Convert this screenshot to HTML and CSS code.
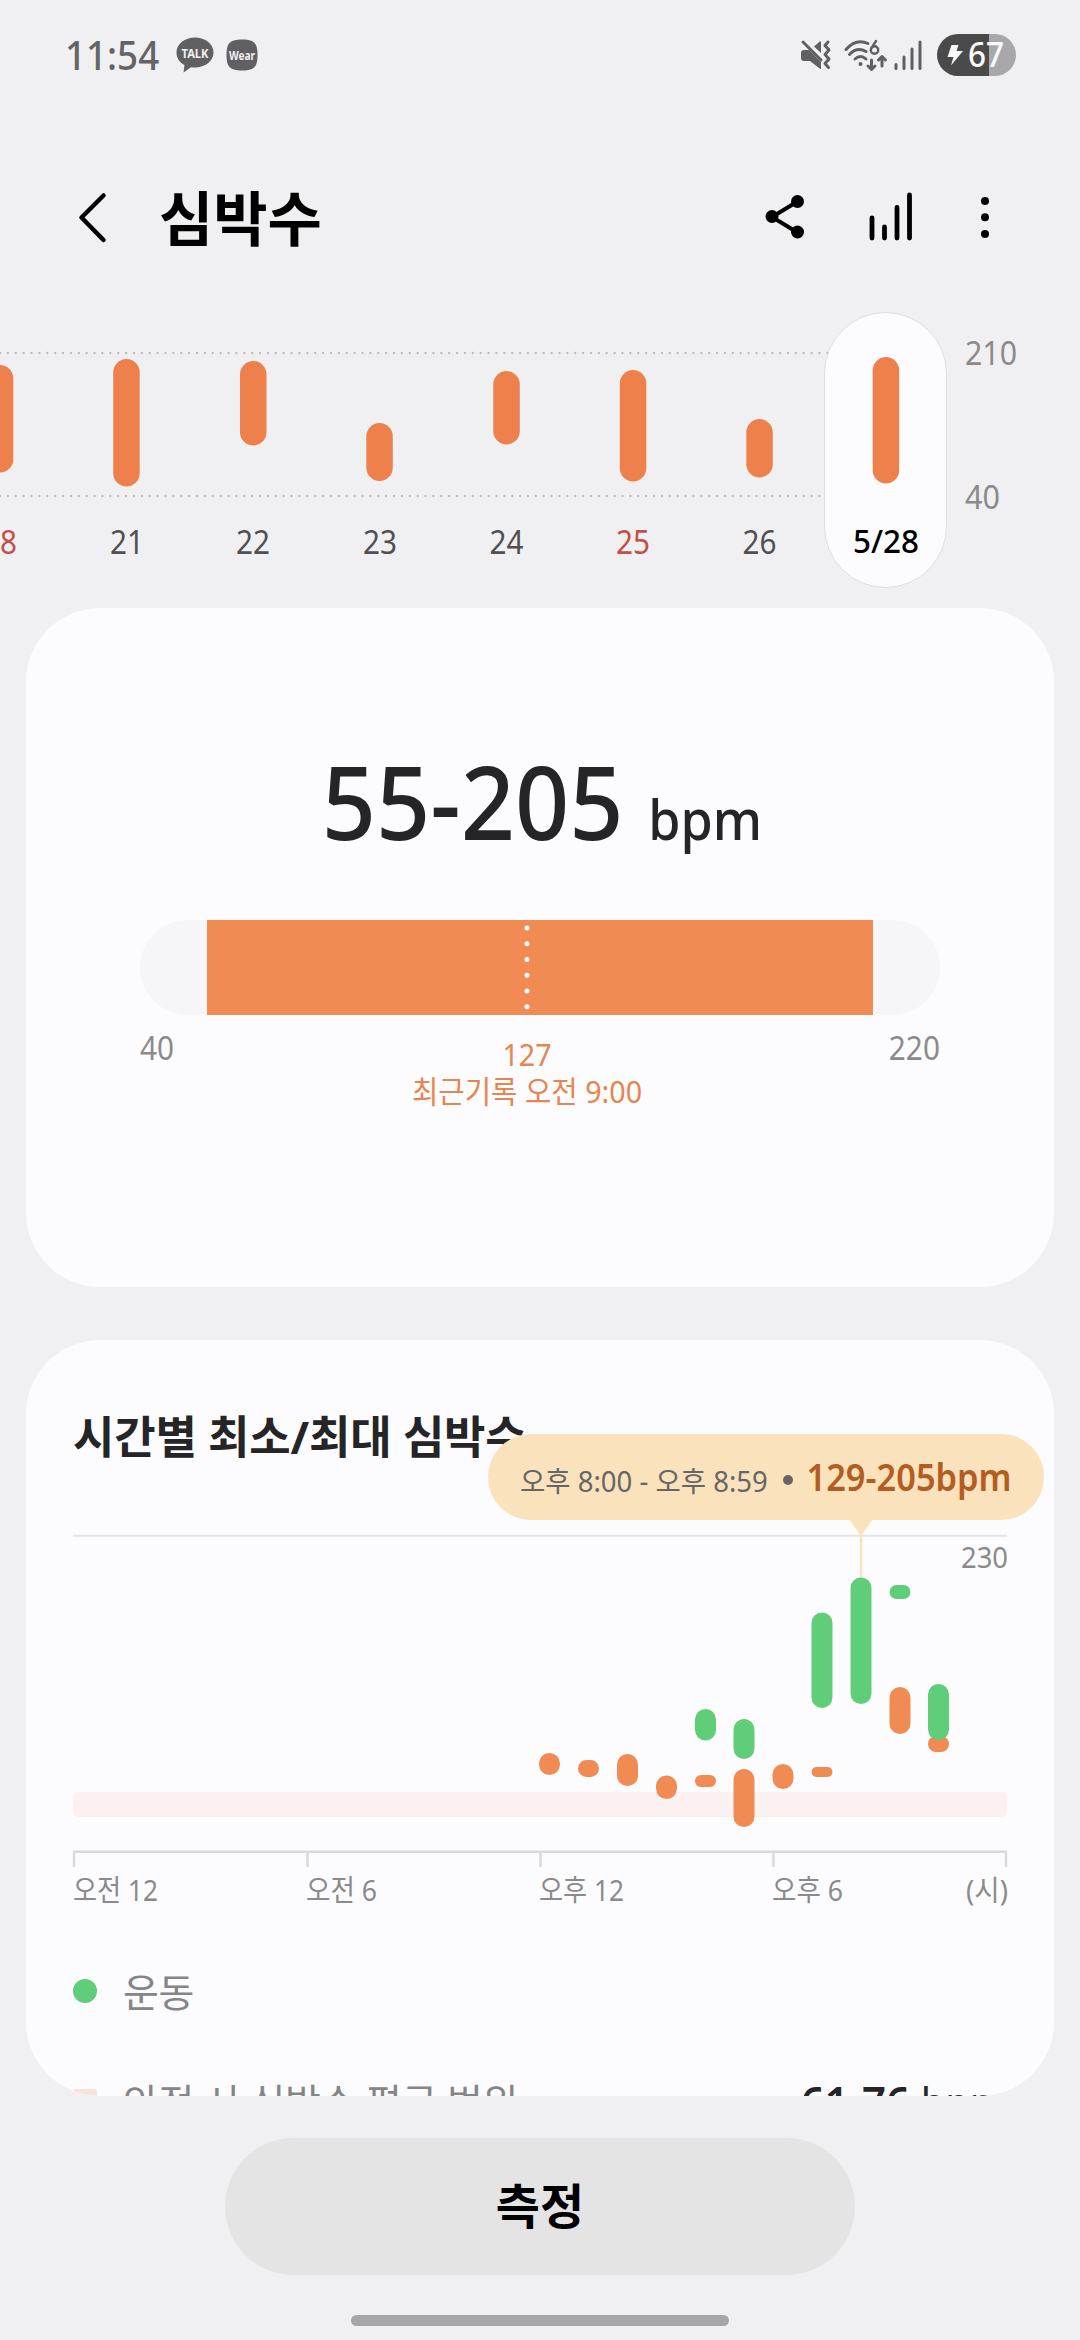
FILE: index.html
```html
<!DOCTYPE html>
<html lang="ko">

<head>
    <meta charset="UTF-8">
    <meta name="viewport" content="width=device-width, initial-scale=1.0">
    <title>심박수</title>
    <link rel="stylesheet" href="styles.css">
</head>

<body>
    <div class="status-bar">
        <div class="status-left">
            <span class="clock">11:54</span>
            <svg class="talk-icon" width="38" height="36" viewBox="0 0 38 36">
                <path d="M19 0.500C8.800 0.500 0.500 7 0.500 15.500c0 5.500 3 10 8 12.500L7.500 35.500l7.500-5.300c1.300 0.300 2.600 0.300 4 0.300 10.200 0 18.500-6.500 18.500-15S29.200 0.500 19 0.500z" />
                <text x="19" y="20.500" font-size="13" textLength="27" lengthAdjust="spacingAndGlyphs">TALK</text>
            </svg>
            <svg class="wear-icon" width="32" height="32" viewBox="0 0 32 32">
                <path d="M16 0.500C28 0.500 31.500 4 31.500 16S28 31.500 16 31.500 0.500 28 0.500 16 4 0.500 16 0.500z" />
                <text x="16" y="20.500" font-size="11.500" textLength="26" lengthAdjust="spacingAndGlyphs">Wear</text>
            </svg>
        </div>
        <div class="status-right">
            <svg width="32" height="32" viewBox="0 0 32 32">
                <path class="fill" d="M1 14q0-3 3-3h5l12 12v6.500q0 1-1 0.300L10 22H4q-3 0-3-3z" />
                <path class="fill" d="M14 7.500l5.700-5q1.300-0.800 1.300 0.800V14z" />
                <path class="line" d="M3 3l18 18M28 3l-3 3.500 4 4.500-4 4.500 4 4.500-4 4.500 3.500 4" />
            </svg>
            <svg class="wifi" width="42" height="32" viewBox="0 0 42 32">
                <path class="line" d="M2 10.500Q12 -1 24 4.500M5.500 15.500Q13 7.500 22 12.500M11 20q5.500-5 11 0M27.500 21v9M24 27l3.500 3.500L31 27M38 27v-9M34.500 21l3.500-3.500 3.500 3.500" />
                <circle class="fill" cx="16.500" cy="25" r="2" />
                <circle class="line six" cx="30.500" cy="11" r="3.700" />
                <path class="line six" d="M27.500 9l4.500-7" />
            </svg>
            <svg class="signal" width="28" height="32" viewBox="0 0 28 32">
                <path class="line" d="M2 25.500v4M10 18v11.500M18 10v19.500M26 3v26.500" />
            </svg>
            <div class="battery">
                <svg width="16" height="22" viewBox="0 0 16 22">
                    <path d="M4.500 1h7L9.500 7H16L4 21.500 6.500 13H0.500z" />
                </svg>
                <span>67</span>
            </div>
        </div>
    </div>

    <div class="app-bar">
        <svg class="back" width="30" height="52" viewBox="0 0 30 52">
            <path d="M26.500 3.500L4.500 25.500l22 22.500" />
        </svg>
        <h1>심박수</h1>
        <div class="actions">
            <svg width="40" height="50" viewBox="0 0 40 50">
                <path d="M32.500 9.500L7 25l25.500 15.500" stroke="#000" stroke-width="4" fill="none" />
                <circle cx="7" cy="24.500" r="6.500" />
                <circle cx="32.500" cy="9.500" r="6.500" />
                <circle cx="32.500" cy="40" r="6.500" />
            </svg>
            <svg width="44" height="50" viewBox="0 0 44 50">
                <path d="M3 26v20M15.500 35v11M28 15.500V46M40.500 3v43" stroke="#000" stroke-width="4.800" stroke-linecap="round" />
            </svg>
            <svg width="10" height="50" viewBox="0 0 10 50">
                <circle cx="5" cy="9" r="4" />
                <circle cx="5" cy="25.300" r="4" />
                <circle cx="5" cy="42" r="4" />
            </svg>
        </div>
    </div>

    <!-- daily min/max strip -->
    <svg class="daily" width="1080" height="308" viewBox="0 300 1080 308">
        <path class="dots" d="M0 353H828M0 496H828" />
        <rect class="selected" x="824.500" y="312.500" width="122" height="275" rx="61" />
        <g class="bar">
            <rect x="-13.200" y="365" width="26.500" height="107.500" rx="13.250" />
            <rect x="113.200" y="359" width="26.500" height="127.500" rx="13.250" />
            <rect x="240" y="361" width="26.500" height="84.500" rx="13.250" />
            <rect x="366.300" y="423" width="26.500" height="58" rx="13.250" />
            <rect x="493.300" y="371" width="26.500" height="73.500" rx="13.250" />
            <rect x="619.800" y="370" width="26.500" height="111.500" rx="13.250" />
            <rect x="746.300" y="419" width="26.500" height="58.500" rx="13.250" />
            <rect x="872.700" y="357" width="26.500" height="126.500" rx="13.250" />
        </g>
        <g class="days">
            <text class="holiday" x="0" y="554" textLength="34" lengthAdjust="spacingAndGlyphs">18</text>
            <text x="127" y="554" textLength="34" lengthAdjust="spacingAndGlyphs">21</text>
            <text x="253" y="554" textLength="34" lengthAdjust="spacingAndGlyphs">22</text>
            <text x="380" y="554" textLength="34" lengthAdjust="spacingAndGlyphs">23</text>
            <text x="506.500" y="554" textLength="34" lengthAdjust="spacingAndGlyphs">24</text>
            <text class="holiday" x="633" y="554" textLength="34" lengthAdjust="spacingAndGlyphs">25</text>
            <text x="759.500" y="554" textLength="34" lengthAdjust="spacingAndGlyphs">26</text>
            <text class="today" x="886" y="553" textLength="66" lengthAdjust="spacingAndGlyphs">5/28</text>
        </g>
        <text class="scale" x="965" y="365" textLength="52" lengthAdjust="spacingAndGlyphs">210</text>
        <text class="scale" x="965" y="508.500" textLength="35" lengthAdjust="spacingAndGlyphs">40</text>
    </svg>

    <div class="scroll">
        <section class="card summary">
            <div class="reading">55-205 <small>bpm</small></div>
            <div class="gauge">
                <div class="gauge-fill" style="left: 8.330%; width: 83.330%"></div>
                <svg class="gauge-mark" style="left: 48.330%" width="6" height="95" viewBox="0 0 6 95">
                    <path d="M3 8v80" />
                </svg>
            </div>
            <div class="gauge-labels">
                <span class="low">40</span>
                <div class="latest" style="left: 48.330%">127<br>최근기록 오전 9:00</div>
                <span class="high">220</span>
            </div>
        </section>

        <section class="card hourly">
            <h2>시간별 최소/최대 심박수</h2>
            <svg class="hourly-chart" width="1028" height="442" viewBox="26 1480 1028 442">
                <path class="grid" d="M73 1535.700H1007" />
                <rect class="resting" x="73" y="1792" width="934" height="25" rx="5" />
                <path class="axis" d="M73 1851.700H1007M74 1852v15M307.500 1852v15M540.500 1852v15M773.500 1852v15M1006 1852v15" />
                <path class="pointer" d="M861 1535v44" />
                <g class="rest">
                    <rect x="539" y="1753" width="21" height="22" rx="10.500" />
                    <rect x="578" y="1760" width="21" height="17" rx="8.500" />
                    <rect x="617" y="1754" width="21" height="32" rx="10.500" />
                    <rect x="656" y="1775.500" width="21" height="23.500" rx="10.500" />
                    <rect x="695" y="1775" width="21" height="12" rx="6" />
                    <rect x="733.500" y="1769" width="21" height="58" rx="10.500" />
                    <rect x="772.500" y="1764" width="21" height="25" rx="10.500" />
                    <rect x="811.500" y="1767" width="21" height="10" rx="5" />
                    <rect x="889.500" y="1687" width="21" height="47" rx="10.500" />
                    <rect x="928" y="1736" width="21" height="16" rx="8" />
                </g>
                <g class="exercise">
                    <rect x="695" y="1709" width="21" height="31.500" rx="10.500" />
                    <rect x="733.500" y="1719" width="21" height="40" rx="10.500" />
                    <rect x="811.500" y="1612.500" width="21" height="95.500" rx="10.500" />
                    <rect x="850.500" y="1577.500" width="21" height="126.500" rx="10.500" />
                    <rect x="889.500" y="1585" width="21" height="14" rx="7" />
                    <rect x="928" y="1684" width="21" height="56" rx="10.500" />
                </g>
                <text x="961" y="1567.500" textLength="47" lengthAdjust="spacingAndGlyphs">230</text>
                <text x="73" y="1900.500" textLength="85" lengthAdjust="spacingAndGlyphs">오전 12</text>
                <text x="306" y="1900.500" textLength="71" lengthAdjust="spacingAndGlyphs">오전 6</text>
                <text x="539" y="1900.500" textLength="85" lengthAdjust="spacingAndGlyphs">오후 12</text>
                <text x="772" y="1900.500" textLength="71" lengthAdjust="spacingAndGlyphs">오후 6</text>
                <text x="966" y="1900.500" textLength="42" lengthAdjust="spacingAndGlyphs">(시)</text>
            </svg>
            <div class="tooltip">
                <span class="period">오후 8:00 - 오후 8:59</span>
                <i class="dot"></i>
                <b>129-205bpm</b>
            </div>
            <div class="legend">
                <div class="legend-row"><i class="mark-exercise"></i><span>운동</span></div>
                <div class="legend-row"><i class="mark-resting"></i><span>안정 시 심박수 평균 범위</span><strong>61-76 <small>bpm</small></strong></div>
            </div>
        </section>
    </div>

    <div class="bottom">
        <button class="measure">측정</button>
        <div class="home-handle"></div>
    </div>
</body>

</html>
```

FILE: styles.css
```css
* {
    box-sizing: border-box;
}

body {
    margin: 0;
    width: 1080px;
    height: 2340px;
    overflow: hidden;
    display: flex;
    flex-direction: column;
    background: #f0f0f2;
    font-family: "Noto Sans", "Noto Sans CJK KR", sans-serif;
}

svg {
    display: block;
    flex: none;
}

/* Status bar */
.status-bar {
    height: 110px;
    padding: 0 64px 0 65px;
    display: flex;
    align-items: center;
    justify-content: space-between;
    color: #646466;
}

.status-left,
.status-right {
    display: flex;
    align-items: center;
}

.clock {
    width: 111px;
    font-size: 40px;
    line-height: 46px;
    font-weight: 500;
    transform: scaleX(0.92);
    transform-origin: left;
}

.talk-icon,
.wear-icon {
    fill: #606062;
}

.wear-icon {
    margin-left: 12px;
}

.status-left text {
    fill: #f0f0f2;
    text-anchor: middle;
    font-weight: 700;
}

.status-right .fill {
    fill: #606062;
}

.status-right .line {
    fill: none;
    stroke: #606062;
    stroke-width: 3;
    stroke-linecap: round;
    stroke-linejoin: round;
}

.status-right .six {
    stroke-width: 2.4;
}

.wifi {
    margin-left: 12px;
    overflow: visible;
}

.signal {
    margin-left: 8px;
}

.battery {
    margin-left: 15px;
    width: 79px;
    height: 42px;
    border-radius: 21px;
    background: linear-gradient(90deg, #4a4a4a 52px, #a8a8aa 52px);
    display: flex;
    align-items: center;
    padding-left: 10px;
    gap: 5px;
    color: #fafafa;
    font-size: 35px;
    line-height: 42px;
    font-weight: 500;
}

.battery span {
    margin-top: -2px;
    transform: scaleX(0.9);
    transform-origin: left;
}

.battery svg {
    fill: #fafafa;
}

/* App bar */
.app-bar {
    height: 190px;
    padding: 24px 90px 0 77px;
    display: flex;
    align-items: flex-start;
}

.back {
    margin-top: 58px;
    fill: none;
    stroke: #000;
    stroke-width: 4.5;
    stroke-linecap: round;
    stroke-linejoin: round;
}

.app-bar h1 {
    margin: 50px 0 0 52px;
    font-size: 59px;
    line-height: 68px;
}

.actions {
    margin: 58px 0 0 auto;
    display: flex;
}

.actions svg:nth-child(1) {
    margin-right: 64px;
}

.actions svg:nth-child(2) {
    margin-right: 67px;
}

/* Daily strip */
.daily .dots {
    stroke: #bdbdbf;
    stroke-width: 2.4;
    stroke-linecap: round;
    stroke-dasharray: 0 7.88;
}

.daily .selected {
    fill: #fcfcfe;
    stroke: #dededf;
}

.daily .bar {
    fill: #ee814b;
}

.daily text {
    font-size: 32px;
    fill: #505052;
}

.days {
    text-anchor: middle;
}

.daily .holiday {
    fill: #c44f46;
}

.daily .today {
    fill: #000;
    font-weight: 500;
}

.daily .scale {
    fill: #8a8a8a;
}

/* Cards */
.scroll {
    height: 1488px;
    padding: 0 26px;
    display: flex;
    flex-direction: column;
    gap: 53px;
}

.card {
    flex: none;
    border-radius: 74px;
    background: #fcfcfe;
}

.summary {
    height: 679px;
    padding: 133px 114px 0;
}

.reading {
    height: 120px;
    line-height: 120px;
    font-size: 102px;
    font-weight: 500;
    text-align: center;
    white-space: nowrap;
    color: #252527;
    transform: translateX(2px) scaleX(0.93);
}

.reading small {
    font-size: 56px;
}

.gauge {
    position: relative;
    height: 95px;
    margin-top: 59px;
    border-radius: 48px;
    background: #f6f6f8;
}

.gauge-fill {
    position: absolute;
    height: 95px;
    background: #ef8b53;
}

.gauge-mark {
    position: absolute;
    margin-left: -3px;
    fill: none;
    stroke: #fff;
    stroke-width: 5;
    stroke-linecap: round;
    stroke-dasharray: 0 15.75;
}

.gauge-labels {
    position: relative;
    display: flex;
    justify-content: space-between;
    padding-top: 13px;
    font-size: 32px;
    line-height: 40px;
    color: #8a8a8c;
}

.low {
    transform: scaleX(0.93);
    transform-origin: left;
}

.high {
    transform: scaleX(0.93);
    transform-origin: right;
}

.latest {
    position: absolute;
    top: 21px;
    transform: translateX(-50%) scaleX(0.925);
    font-size: 31px;
    line-height: 37px;
    text-align: center;
    white-space: nowrap;
    color: #e6854f;
}

/* Hourly card */
.hourly {
    position: relative;
    height: 756px;
    overflow: hidden;
}

.hourly h2 {
    height: 140px;
    margin: 0;
    padding: 69px 0 0 47px;
    font-size: 45px;
    line-height: 56px;
    letter-spacing: -0.2px;
    color: #252527;
}

.hourly-chart text {
    font-size: 29px;
    fill: #8a8a8c;
}

.grid {
    stroke: #e4e4e5;
    stroke-width: 2;
}

.axis {
    fill: none;
    stroke: #d9d9da;
    stroke-width: 2.4;
}

.pointer {
    stroke: #fae2bd;
    stroke-width: 2.4;
}

.resting {
    fill: #fbf1f0;
}

.rest {
    fill: #ef8b53;
}

.exercise {
    fill: #60ce79;
}

.tooltip {
    position: absolute;
    left: 462px;
    top: 94px;
    width: 556px;
    height: 86px;
    padding: 0 32px;
    border-radius: 43px;
    background: #fae2bd;
    display: flex;
    align-items: center;
    justify-content: space-between;
    white-space: nowrap;
    color: #666;
}

.tooltip::after {
    content: "";
    position: absolute;
    left: 361px;
    top: 85px;
    border: 12px solid transparent;
    border-top: 17px solid #fae2bd;
    border-bottom: 0;
}

.period {
    margin-right: -6px;
    padding-top: 4px;
    font-size: 28.5px;
    transform: scaleX(0.965);
    transform-origin: left;
}

.tooltip .dot {
    width: 10px;
    height: 10px;
    margin-top: 6px;
    border-radius: 5px;
    background: #666;
}

.tooltip b {
    margin: -2px 0 0 -20px;
    font-size: 38px;
    font-weight: 600;
    color: #b45d22;
    transform: scaleX(0.905);
    transform-origin: right;
}

.legend {
    padding: 43px 47px 0;
}

.legend-row {
    height: 110px;
    line-height: 56px;
    display: flex;
    align-items: flex-start;
    font-size: 39px;
    color: #858587;
}

.legend-row span {
    margin-top: -1px;
    letter-spacing: -0.3px;
}

.legend-row i {
    width: 24px;
    height: 24px;
    margin: 14px 26px 0 0;
}

.mark-exercise {
    border-radius: 12px;
    background: #60ce79;
}

.mark-resting {
    border-radius: 3px;
    background: #f7e3db;
}

.legend-row strong {
    margin: -2px 0 0 auto;
    font-size: 44px;
    font-weight: 600;
    color: #252527;
    transform: scaleX(0.95);
    transform-origin: right;
}

.legend-row small {
    font-size: 42px;
    font-weight: 400;
}

/* Bottom */
.bottom {
    padding-top: 42px;
    display: flex;
    flex-direction: column;
    align-items: center;
}

.measure {
    width: 630px;
    height: 137px;
    padding: 0 0 6px;
    border: 0;
    border-radius: 69px;
    background: #e4e4e5;
    color: #000;
    font: 700 48px/131px "Noto Sans CJK KR", sans-serif;
}

.home-handle {
    width: 378px;
    height: 11px;
    margin-top: 40px;
    border-radius: 6px;
    background: #a6a6a8;
}
```
